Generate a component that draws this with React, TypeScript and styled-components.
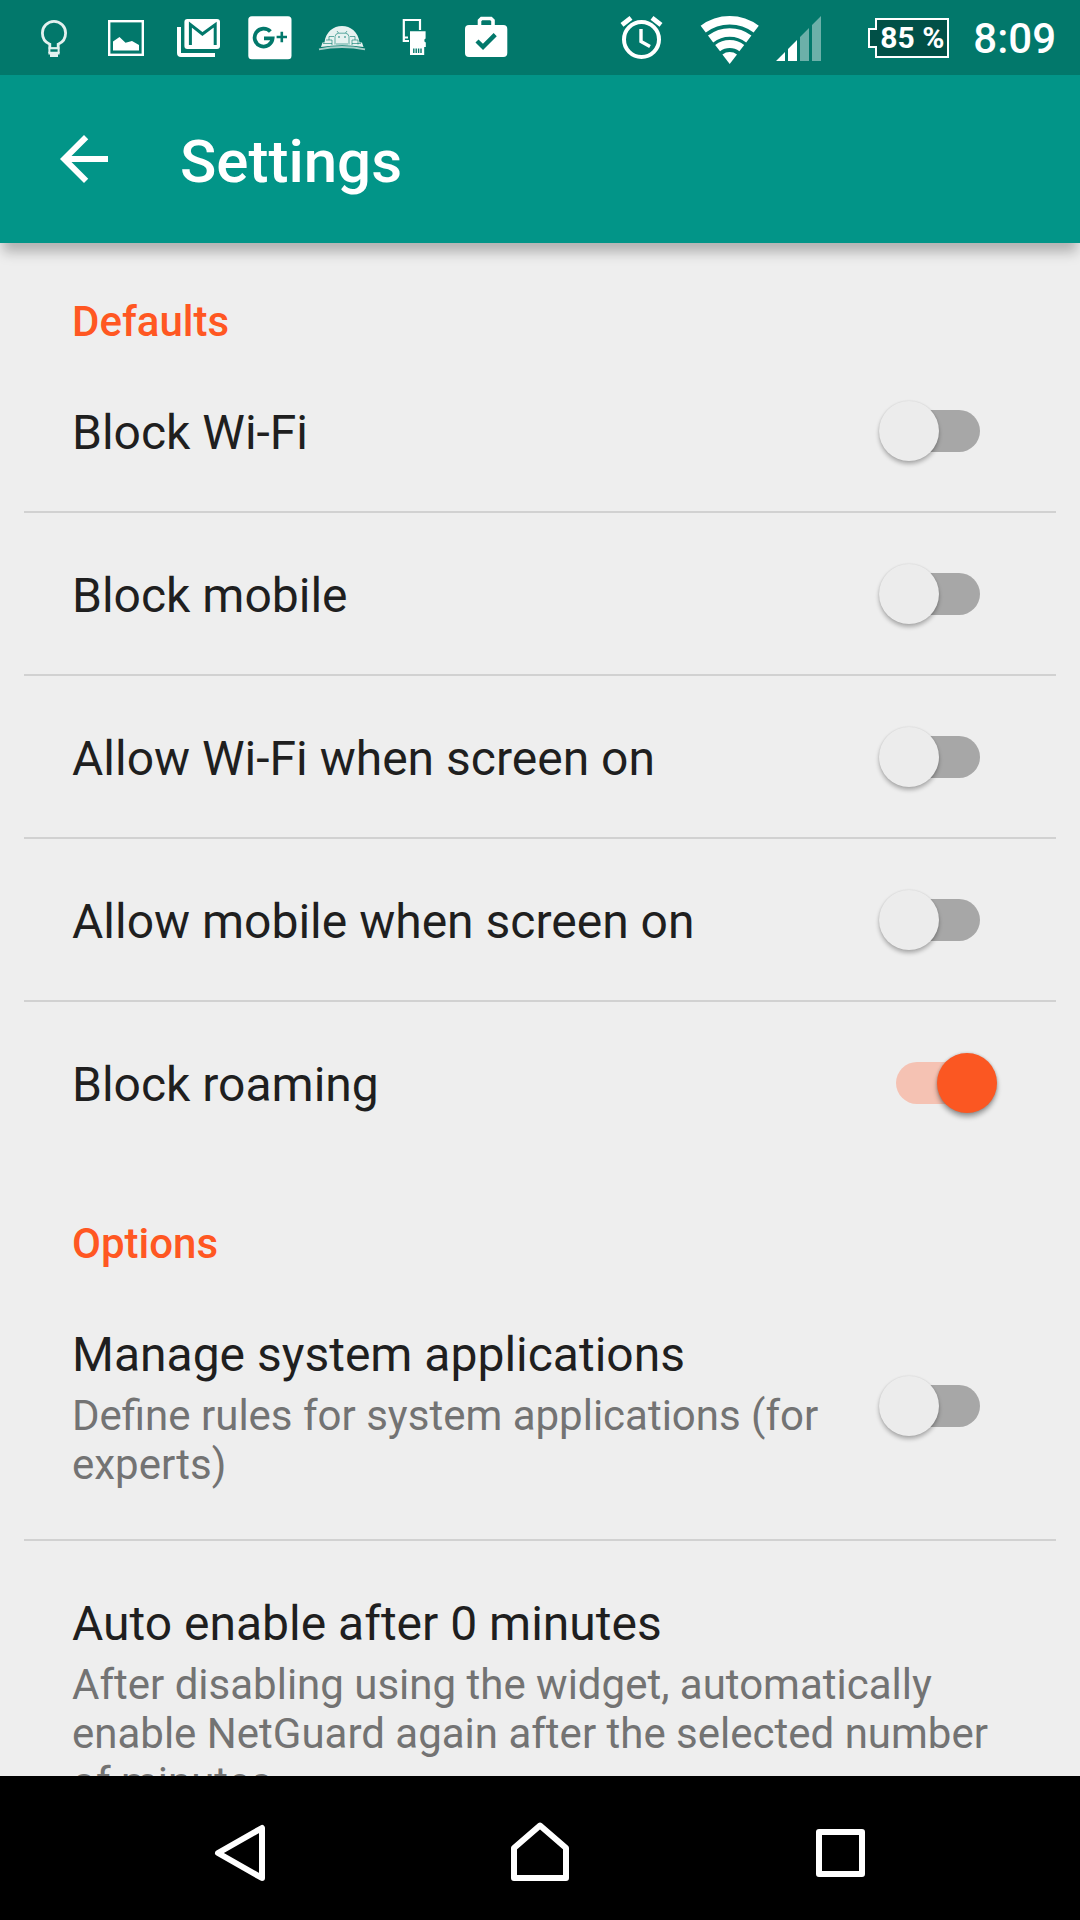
import React, { useId, useState } from "react";
import styled, { createGlobalStyle } from "styled-components";

const color = {
  statusBar: "#02786b",
  toolbar: "#029588",
  surface: "#eeeeee",
  accent: "#ff5722",
  title: "#1f1f1f",
  summary: "#737373",
  divider: "#d1d1d1",
};

const GlobalStyle = createGlobalStyle`
  *, *::before, *::after { box-sizing: border-box; }
  body { margin: 0; background: ${color.surface}; }
`;

const Screen = styled.div`
  display: flex;
  flex-direction: column;
  height: 100vh;
  overflow: hidden;
  background: ${color.surface};
  font-family: Roboto, "Noto Sans", sans-serif;
`;

const StatusBar = styled.div`
  display: flex;
  justify-content: space-between;
  flex: none;
  height: 75px;
  padding: 0 24px 0 18px;
  background: ${color.statusBar};
  color: #fff;
`;

const StatusGroup = styled.div`
  display: flex;
  align-items: center;
`;

const StatusSvg = styled.svg<{ $width?: number }>`
  display: block;
  flex: none;
  width: ${(p) => p.$width ?? 72}px;
  height: 75px;
  fill: none;
`;

const Battery = styled.div`
  display: flex;
  align-items: center;
  margin-right: 24px;
`;

const BatteryTip = styled.span`
  z-index: 1;
  width: 9px;
  height: 20px;
  margin-right: -2px;
  border: 2px solid #fff;
  border-right: 0;
  background: #015047;
`;

const BatteryLevel = styled.span`
  display: flex;
  justify-content: center;
  width: 74px;
  height: 40px;
  border: 2px solid #fff;
  background: #015047;
  font-size: 30px;
  font-weight: 700;
  line-height: 36px;
  white-space: nowrap;
`;

const Clock = styled.time`
  font-size: 42px;
  font-weight: 500;
  line-height: 48px;
  padding-top: 3px;
`;

const Toolbar = styled.header`
  display: flex;
  align-items: center;
  gap: 60px;
  flex: none;
  z-index: 1;
  height: 168px;
  padding: 0 48px;
  background: ${color.toolbar};
  color: #fff;
  box-shadow: 0 12px 12px -3px rgba(0, 0, 0, 0.26);
`;

const IconButton = styled.button`
  display: flex;
  align-items: center;
  justify-content: center;
  padding: 0;
  border: 0;
  background: none;
  color: #fff;
  cursor: pointer;
`;

const Icon = styled.svg`
  display: block;
  width: 72px;
  height: 72px;
`;

const PageTitle = styled.h1`
  margin: 0;
  padding-top: 5px;
  font-size: 60px;
  font-weight: 500;
  line-height: 72px;
`;

const Preferences = styled.main`
  flex: 1;
  min-height: 0;
  overflow-y: auto;
  scrollbar-width: none;
`;

const CategoryTitle = styled.h2`
  margin: 0;
  padding: 55px 72px 4px;
  color: ${color.accent};
  font-size: 42px;
  font-weight: 500;
  line-height: 48px;
`;

const Row = styled.div<{ $last?: boolean }>`
  display: flex;
  align-items: center;
  gap: 48px;
  margin: 0 24px;
  padding: 0 48px;
  border-bottom: 2px solid ${(p) => (p.$last ? "transparent" : color.divider)};
`;

const RowText = styled.label`
  display: block;
  flex: 1;
  min-width: 0;
  padding: 55px 0 50px;
`;

const RowTitle = styled.span`
  display: block;
  color: ${color.title};
  font-size: 48px;
  line-height: 56px;
`;

const RowSummary = styled.span`
  display: block;
  margin-top: 8px;
  color: ${color.summary};
  font-size: 42px;
  line-height: 49px;
`;

const RowAction = styled.button`
  flex: 1;
  min-width: 0;
  padding: 55px 0 50px;
  border: 0;
  background: none;
  font: inherit;
  text-align: left;
  cursor: pointer;
`;

const Switch = styled.input`
  appearance: none;
  display: grid;
  align-items: center;
  flex: none;
  width: 118px;
  height: 60px;
  margin: 0 11px 0 0;
  cursor: pointer;

  &::before,
  &::after {
    content: "";
    grid-area: 1 / 1;
  }

  &::before {
    justify-self: center;
    width: 84px;
    height: 42px;
    border-radius: 21px;
    background: #a7a7a7;
  }

  &::after {
    justify-self: start;
    width: 60px;
    height: 60px;
    border-radius: 50%;
    background: #ececec;
    box-shadow: 0 3px 4px rgba(0, 0, 0, 0.28), 0 0 2px rgba(0, 0, 0, 0.1);
  }

  &:checked::before {
    background: #f5c2b3;
  }

  &:checked::after {
    justify-self: end;
    background: #fb5722;
    box-shadow: 0 4px 5px rgba(0, 0, 0, 0.34), 0 0 3px rgba(0, 0, 0, 0.2);
  }
`;

const NavBar = styled.nav`
  display: flex;
  flex: none;
  height: 144px;
  padding: 0 90px;
  background: #000;

  & > button {
    flex: 1;
  }
`;

const NavIcon = styled(Icon)`
  fill: none;
  stroke: #fff;
  stroke-width: 6px;
  stroke-linejoin: round;
`;

function NotificationIcons() {
  const teal = color.statusBar;
  return (
    <StatusGroup>
      <StatusSvg viewBox="0 0 72 75" aria-label="Tip">
        <g stroke="#e3f1ef">
          <path
            d="M31.8 48V44.2C27.3 42.4 24.4 38.3 24.4 33a11.6 11.6 0 0 1 23.2 0c0 5.3-2.9 9.4-7.4 11.2V48"
            strokeWidth="2.8"
          />
          <path d="M30.6 48.2H41.4" strokeWidth="2.2" />
          <path d="M31.4 48V53M40.6 48V53" strokeWidth="2" />
        </g>
        <path d="M30.4 51.8H41.6V54.6H40V57H32V54.6H30.4Z" fill="#e3f1ef" />
      </StatusSvg>
      <StatusSvg viewBox="0 0 72 75" aria-label="Picture saved">
        <rect x="19.2" y="21.2" width="33.6" height="33.6" stroke="#fff" strokeWidth="2.4" />
        <path d="M23 50.5V41.5L29.5 37L35.5 42.8L42 41L49 45V50.5Z" fill="#fff" />
      </StatusSvg>
      <StatusSvg viewBox="0 0 72 75" aria-label="New mail">
        <path d="M17 27V53Q17 55 19 55H53" stroke="#fff" strokeWidth="4" />
        <rect x="22.4" y="19" width="35.6" height="30" rx="3" fill="#fff" />
        <path d="M28.4 45V24.6L40.4 34L53.2 24.6V45" stroke={teal} strokeWidth="3" />
      </StatusSvg>
      <StatusSvg viewBox="0 0 72 75" aria-label="Google Plus">
        <rect x="14.3" y="16.3" width="43.2" height="43" rx="3.5" fill="#fff" />
        <path d="M36.4 31.6A9 9 0 1 0 38.6 38.4H30" stroke={teal} strokeWidth="3.8" />
        <path d="M42.6 37H53M47.8 31.8V42.2" stroke={teal} strokeWidth="2.6" />
      </StatusSvg>
      <StatusSvg viewBox="0 0 72 75" aria-label="Android build">
        <path
          d="M15 47L16.5 42.5H18.5C19.5 32 27.5 26 36 26S52.5 32 53.5 42.5H56L57.5 47Q36 43.5 15 47Z"
          fill="#e6f2f0"
        />
        <path d="M13 49.4Q36 44.6 59 49.4" stroke="#a9d0cb" strokeWidth="1.8" />
        <g stroke={teal} strokeWidth="0.6">
          <path d="M29 44.5V36.5Q29.5 33.5 32.5 33.2H39.5Q42.5 33.5 43 36.5V44.5" />
          <path d="M31 31L32.6 33.2M41 31L39.4 33.2" />
          <path d="M20 40H26V45M46 45V40H52V44.5M23 40V36.5H28M44 36.5H49V40M30 44H42M17 43.5H26M46 43.5H55" />
        </g>
        <circle cx="33" cy="37" r="0.8" fill={teal} />
        <circle cx="39" cy="37" r="0.8" fill={teal} />
      </StatusSvg>
      <StatusSvg viewBox="0 0 72 75" aria-label="Storage">
        <path d="M42 30V20H25.8V41H31M25.8 37.5H30" stroke="#fff" strokeWidth="2.2" />
        <path d="M32 31.3H47.6V38.5L46.4 39.5V41.5L47.8 42.5V47H46.2V55H32Z" fill="#fff" />
        <path d="M35.8 48.5V53M38.2 48.5V53M40.6 48.5V53M43 48.5V53" stroke={teal} strokeWidth="1.4" />
      </StatusSvg>
      <StatusSvg viewBox="0 0 72 75" aria-label="Apps updated">
        <path d="M29.5 26V20.5L31.5 18.5H41L43 20.5V26" stroke="#fff" strokeWidth="3.6" />
        <rect x="15" y="25" width="42.3" height="32" rx="4" fill="#fff" />
        <path d="M27 41L33 46.8L45.2 34.6" stroke={teal} strokeWidth="4.4" />
      </StatusSvg>
    </StatusGroup>
  );
}

function SystemIcons() {
  return (
    <StatusGroup>
      <StatusSvg $width={82} viewBox="0 0 82 75" stroke="#fff" aria-label="Alarm set">
        <circle cx="23.5" cy="39.5" r="17.5" strokeWidth="4" />
        <path d="M23 29V41.5L32 46.5" strokeWidth="3.4" />
        <path d="M4 24.8L13 17.8M34 17.8L43 24.8" strokeWidth="4.8" />
      </StatusSvg>
      <StatusSvg $width={74} viewBox="0 0 74 75" stroke="#fff" aria-label="Wi-Fi connected">
        <path d="M3.2 29.2A43.8 43.8 0 0 1 56.2 29.2" strokeWidth="8.5" />
        <path d="M10.6 39A31.5 31.5 0 0 1 48.8 39" strokeWidth="8.6" />
        <path d="M17.6 48.1A20 20 0 0 1 41.8 48.1" strokeWidth="8" />
        <path d="M29.7 64L22.4 54.5A12 12 0 0 1 37 54.5Z" fill="#fff" stroke="none" />
      </StatusSvg>
      <StatusSvg $width={94} viewBox="0 0 94 75" aria-label="Mobile signal">
        <path d="M2 61L11 52V61ZM14 61V49L23 40V61Z" fill="#fff" />
        <path d="M26 61V37L35 28V61ZM38 61V25L47 16V61Z" fill="#fff" fillOpacity="0.42" />
      </StatusSvg>
      <Battery>
        <BatteryTip />
        <BatteryLevel>85 %</BatteryLevel>
      </Battery>
      <Clock dateTime="08:09">8:09</Clock>
    </StatusGroup>
  );
}

type SwitchRowProps = {
  title: string;
  summary?: string;
  initial?: boolean;
  last?: boolean;
};

function SwitchRow({ title, summary, initial = false, last }: SwitchRowProps) {
  const id = useId();
  const [on, setOn] = useState(initial);
  return (
    <Row $last={last}>
      <RowText htmlFor={id}>
        <RowTitle>{title}</RowTitle>
        {summary && <RowSummary>{summary}</RowSummary>}
      </RowText>
      <Switch id={id} type="checkbox" role="switch" checked={on} onChange={(e) => setOn(e.target.checked)} />
    </Row>
  );
}

export default function App() {
  return (
    <Screen>
      <GlobalStyle />
      <StatusBar>
        <NotificationIcons />
        <SystemIcons />
      </StatusBar>
      <Toolbar>
        <IconButton type="button" aria-label="Navigate up">
          <Icon viewBox="0 0 24 24" fill="currentColor">
            <path d="M20 11H7.83l5.59-5.59L12 4l-8 8 8 8 1.41-1.41L7.83 13H20v-2z" />
          </Icon>
        </IconButton>
        <PageTitle>Settings</PageTitle>
      </Toolbar>
      <Preferences>
        <section>
          <CategoryTitle>Defaults</CategoryTitle>
          <SwitchRow title="Block Wi-Fi" />
          <SwitchRow title="Block mobile" />
          <SwitchRow title="Allow Wi-Fi when screen on" />
          <SwitchRow title="Allow mobile when screen on" />
          <SwitchRow title="Block roaming" initial last />
        </section>
        <section>
          <CategoryTitle>Options</CategoryTitle>
          <SwitchRow
            title="Manage system applications"
            summary="Define rules for system applications (for experts)"
          />
          <Row $last>
            <RowAction type="button">
              <RowTitle>Auto enable after 0 minutes</RowTitle>
              <RowSummary>
                After disabling using the widget, automatically enable NetGuard again after the selected number of
                minutes
              </RowSummary>
            </RowAction>
          </Row>
        </section>
      </Preferences>
      <NavBar>
        <IconButton type="button" aria-label="Back">
          <NavIcon viewBox="0 0 72 72">
            <path d="M14 41L58 16V66Z" />
          </NavIcon>
        </IconButton>
        <IconButton type="button" aria-label="Home">
          <NavIcon viewBox="0 0 72 72">
            <path d="M36 13.5L62 36V66H10V36Z" />
          </NavIcon>
        </IconButton>
        <IconButton type="button" aria-label="Recent apps">
          <NavIcon viewBox="0 0 72 72">
            <rect x="15" y="20" width="43" height="42" />
          </NavIcon>
        </IconButton>
      </NavBar>
    </Screen>
  );
}
